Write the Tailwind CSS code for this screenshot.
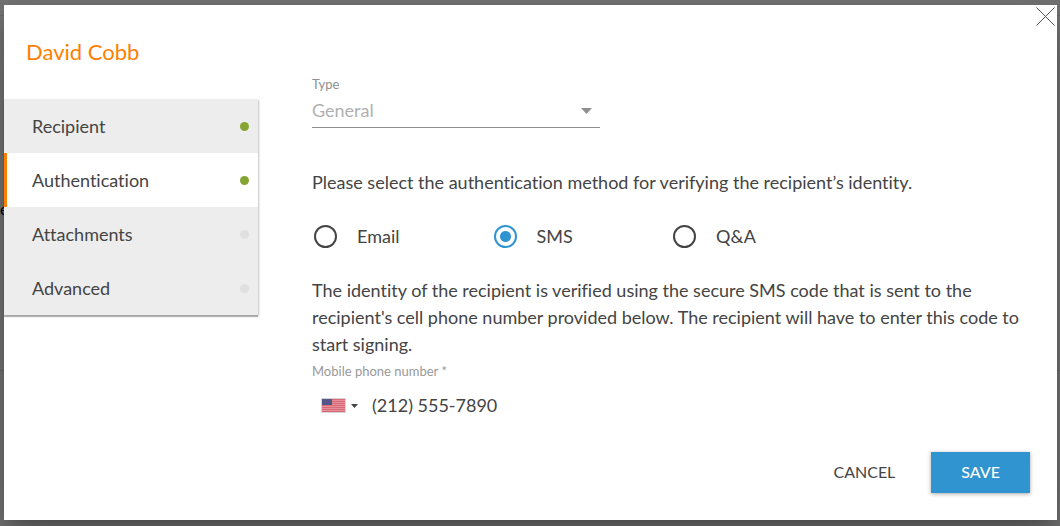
<!DOCTYPE html>
<html lang="en">
  <head>
    <meta charset="UTF-8" />
    <meta name="viewport" content="width=device-width, initial-scale=1.0" />
    <title>Recipient authentication</title>
    <script src="https://cdn.jsdelivr.net/npm/@tailwindcss/browser@4"></script>
  </head>
  <body
    class="relative flex min-h-screen overflow-x-hidden bg-[#757575] pt-[5px] pr-[3px] pb-[6px] pl-1 font-['Lato',sans-serif] text-lg/[27px] text-[#444] [font-variant-ligatures:none]"
  >
    <!-- page behind the dialog -->
    <span class="absolute top-[197px] left-0 text-base text-black">e</span>
    <div class="absolute inset-x-0 top-[15px] h-px bg-black/10"></div>
    <div class="absolute inset-x-0 top-[370px] h-px bg-black/10"></div>

    <div
      role="dialog"
      aria-labelledby="recipient-name"
      class="relative flex flex-1 bg-white shadow-[0_11px_15px_-7px_rgba(0,0,0,0.2),0_24px_38px_3px_rgba(0,0,0,0.14),0_9px_46px_8px_rgba(0,0,0,0.12)]"
    >
      <button aria-label="Close" class="absolute top-[2px] right-[2px]">
        <svg
          class="size-[19px]"
          viewBox="0 0 19 19"
          stroke="#555"
          stroke-width="1"
        >
          <path d="M0.5 0.5l18 18M18.5 0.5l-18 18" />
        </svg>
      </button>

      <aside class="w-[254px] shrink-0">
        <h1
          id="recipient-name"
          class="px-[22px] pt-8 pb-8 text-[22px]/[30px] text-[#ff7f00]"
        >
          David Cobb
        </h1>
        <nav
          class="bg-[#ededed] shadow-[0_2px_1px_rgba(0,0,0,0.25),1px_1px_2px_rgba(0,0,0,0.2)]"
        >
          <a
            href="#recipient"
            class="flex h-[54px] items-center justify-between pr-[9px] pl-7"
          >
            Recipient
            <span class="size-[9px] rounded-full bg-[#85a432]"></span>
          </a>
          <a
            href="#authentication"
            aria-current="page"
            class="flex h-[54px] items-center justify-between border-l-3 border-[#ff7f00] bg-white pr-[9px] pl-[25px]"
          >
            Authentication
            <span class="size-[9px] rounded-full bg-[#85a432]"></span>
          </a>
          <a
            href="#attachments"
            class="flex h-[54px] items-center justify-between pr-[9px] pl-7"
          >
            Attachments
            <span class="size-[9px] rounded-full bg-[#e0e0e0]"></span>
          </a>
          <a
            href="#advanced"
            class="flex h-[54px] items-center justify-between pr-[9px] pl-7"
          >
            Advanced
            <span class="size-[9px] rounded-full bg-[#e0e0e0]"></span>
          </a>
        </nav>
      </aside>

      <form class="flex flex-1 flex-col pt-[70px] pr-[27px] pb-[27px] pl-[54px]">
        <label for="type" class="text-[13px]/[18px] text-[#8f8f8f]">Type</label>
        <div class="relative w-72">
          <select
            id="type"
            disabled
            class="block h-[35px] w-full appearance-none border-b border-[#8f8f8f] text-[#b0b0b0] opacity-100"
          >
            <option>General</option>
          </select>
          <svg
            class="pointer-events-none absolute top-[15px] right-2 h-[6px] w-[11px]"
            viewBox="0 0 11 6"
            fill="#8f8f8f"
          >
            <path d="M0 0h11L5.5 6z" />
          </svg>
        </div>

        <fieldset class="mt-[41px]">
          <legend>
            Please select the authentication method for verifying the
            recipient’s identity.
          </legend>
          <div class="mt-[27px] grid grid-cols-4">
            <label class="flex items-center gap-5 pl-[2px]">
              <input
                type="radio"
                name="method"
                value="email"
                class="size-[23px] appearance-none rounded-full border-2 border-[#444] checked:border-[#3094d1] checked:bg-[radial-gradient(circle,#3094d1_5px,transparent_6px)]"
              />
              Email
            </label>
            <label class="flex items-center gap-5 pl-[2px]">
              <input
                type="radio"
                name="method"
                value="sms"
                checked
                class="size-[23px] appearance-none rounded-full border-2 border-[#444] checked:border-[#3094d1] checked:bg-[radial-gradient(circle,#3094d1_5px,transparent_6px)]"
              />
              SMS
            </label>
            <label class="flex items-center gap-5 pl-[2px]">
              <input
                type="radio"
                name="method"
                value="qa"
                class="size-[23px] appearance-none rounded-full border-2 border-[#444] checked:border-[#3094d1] checked:bg-[radial-gradient(circle,#3094d1_5px,transparent_6px)]"
              />
              Q&amp;A
            </label>
          </div>
        </fieldset>

        <p class="mt-[27px]">
          The identity of the recipient is verified using the secure SMS code
          that is sent to the recipient's cell phone number provided below. The
          recipient will have to enter this code to start signing.
        </p>

        <label for="phone" class="mt-1 text-[13px]/[18px] text-[#999]"
          >Mobile phone number *</label
        >
        <div class="mt-3 flex items-center pl-[9px]">
          <button
            type="button"
            aria-label="Country code"
            class="flex items-center gap-[5px]"
          >
            <svg class="h-[15px] w-[25px]" viewBox="0 0 25 15">
              <rect width="25" height="15" rx="1" fill="#d8d4d6" />
              <rect x="1" y="1" width="23" height="13" fill="#e58f9b" />
              <path
                d="M1 1.5h23M1 3.5h23M1 5.5h23M1 7.5h23M1 9.5h23M1 11.5h23M1 13.5h23"
                stroke="#d96b79"
              />
              <rect x="1" y="1" width="10" height="6" fill="#555688" />
            </svg>
            <svg class="h-1 w-[7px]" viewBox="0 0 7 4" fill="#444">
              <path d="M0 0h7L3.5 4z" />
            </svg>
          </button>
          <input
            id="phone"
            type="tel"
            value="(212) 555-7890"
            class="ml-[14px] h-[27px] min-w-0 flex-1 outline-none"
          />
        </div>

        <div class="mt-auto flex justify-end gap-[6px] text-base/[40px]">
          <button type="button" class="px-[30px] pb-px">CANCEL</button>
          <button
            class="bg-[#3094d1] px-[30px] pb-px font-medium text-white shadow-[0_1px_4px_rgba(0,0,0,0.35)]"
          >
            SAVE
          </button>
        </div>
      </form>
    </div>
  </body>
</html>
